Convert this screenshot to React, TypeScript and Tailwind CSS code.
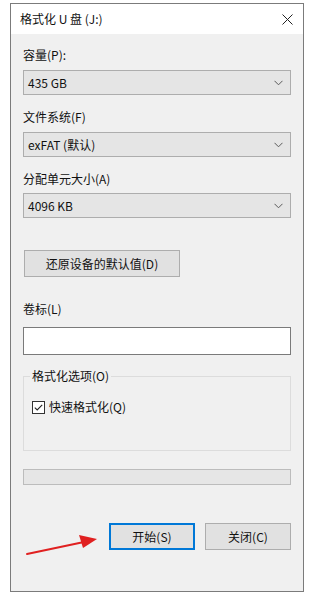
import React from "react";

const font = { fontFamily: '"Noto Sans CJK SC", "Microsoft YaHei", sans-serif' };

function Chevron() {
  return (
    <svg width="9" height="6" viewBox="0 0 9 6" className="shrink-0">
      <path d="M0.5 0.8 L4.5 4.8 L8.5 0.8" fill="none" stroke="#5a5a5a" strokeWidth="1" />
    </svg>
  );
}

function Select({ value }: { value: string }) {
  return (
    <div className="h-[25px] border border-[#adadad] bg-[#e5e5e5] flex items-center justify-between pl-[4px] pr-[7px] text-[12px] text-[#111]">
      <span>{value}</span>
      <Chevron />
    </div>
  );
}

export default function App() {
  return (
    <div className="w-[314px] h-[602px] bg-white pt-[3px] pl-[10px] relative" style={font}>
      <div className="w-[294px] h-[589px] border border-[#7b7b7b] bg-[#f0f0f0] flex flex-col">
        <div className="h-[30px] bg-white flex items-center justify-between pl-[9px] pr-[10px] text-[12px] text-[#111]">
          <span>格式化 U 盘 (J:)</span>
          <svg width="11" height="11" viewBox="0 0 11 11">
            <path d="M0.5 0.5 L10.5 10.5 M10.5 0.5 L0.5 10.5" stroke="#222" strokeWidth="1" />
          </svg>
        </div>
        <div className="flex flex-col px-[12px] text-[12px] text-[#111]">
          <div className="mt-[13px] h-[16px] leading-[16px]">容量(P):</div>
          <div className="mt-[7px]"><Select value="435 GB" /></div>
          <div className="mt-[14px] h-[16px] leading-[16px]">文件系统(F)</div>
          <div className="mt-[7px]"><Select value="exFAT (默认)" /></div>
          <div className="mt-[14px] h-[16px] leading-[16px]">分配单元大小(A)</div>
          <div className="mt-[6px]"><Select value="4096 KB" /></div>
          <div className="mt-[32px] ml-[1px] w-[156px] h-[27px] border border-[#adadad] bg-[#e1e1e1] flex items-center justify-center">
            还原设备的默认值(D)
          </div>
          <div className="mt-[24px] h-[16px] leading-[16px]">卷标(L)</div>
          <div className="mt-[10px] h-[28px] border border-[#7a7a7a] bg-white" />
          <div className="mt-[21px] h-[75px] border border-[#dcdcdc] relative">
            <div className="absolute left-[6px] top-[-9px] px-[2px] bg-[#f0f0f0] leading-[16px]">格式化选项(O)</div>
            <div className="mt-[22px] ml-[8px] flex items-center gap-[4px]">
              <svg width="13" height="13" viewBox="0 0 13 13">
                <rect x="0.5" y="0.5" width="12" height="12" fill="#fff" stroke="#333" />
                <path d="M2.8 6.6 L5.2 9 L10.2 3.8" fill="none" stroke="#222" strokeWidth="1.1" />
              </svg>
              <span className="leading-[16px]">快速格式化(Q)</span>
            </div>
          </div>
          <div className="mt-[18px] h-[16px] border border-[#bcbcbc] bg-[#e6e6e6]" />
          <div className="mt-[38px] flex justify-end gap-[10px]">
            <div className="w-[86px] h-[27px] border-2 border-[#0078d7] bg-[#e1e1e1] flex items-center justify-center">
              开始(S)
            </div>
            <div className="w-[86px] h-[27px] border border-[#adadad] bg-[#e1e1e1] flex items-center justify-center">
              关闭(C)
            </div>
          </div>
        </div>
      </div>
      <svg className="absolute left-0 top-0" width="314" height="602" viewBox="0 0 314 602">
        <path d="M27 554 L84 542" stroke="#e02020" strokeWidth="2" strokeLinecap="round" />
        <path d="M97 539 L79 535 L83 548 Z" fill="#e02020" />
      </svg>
    </div>
  );
}
